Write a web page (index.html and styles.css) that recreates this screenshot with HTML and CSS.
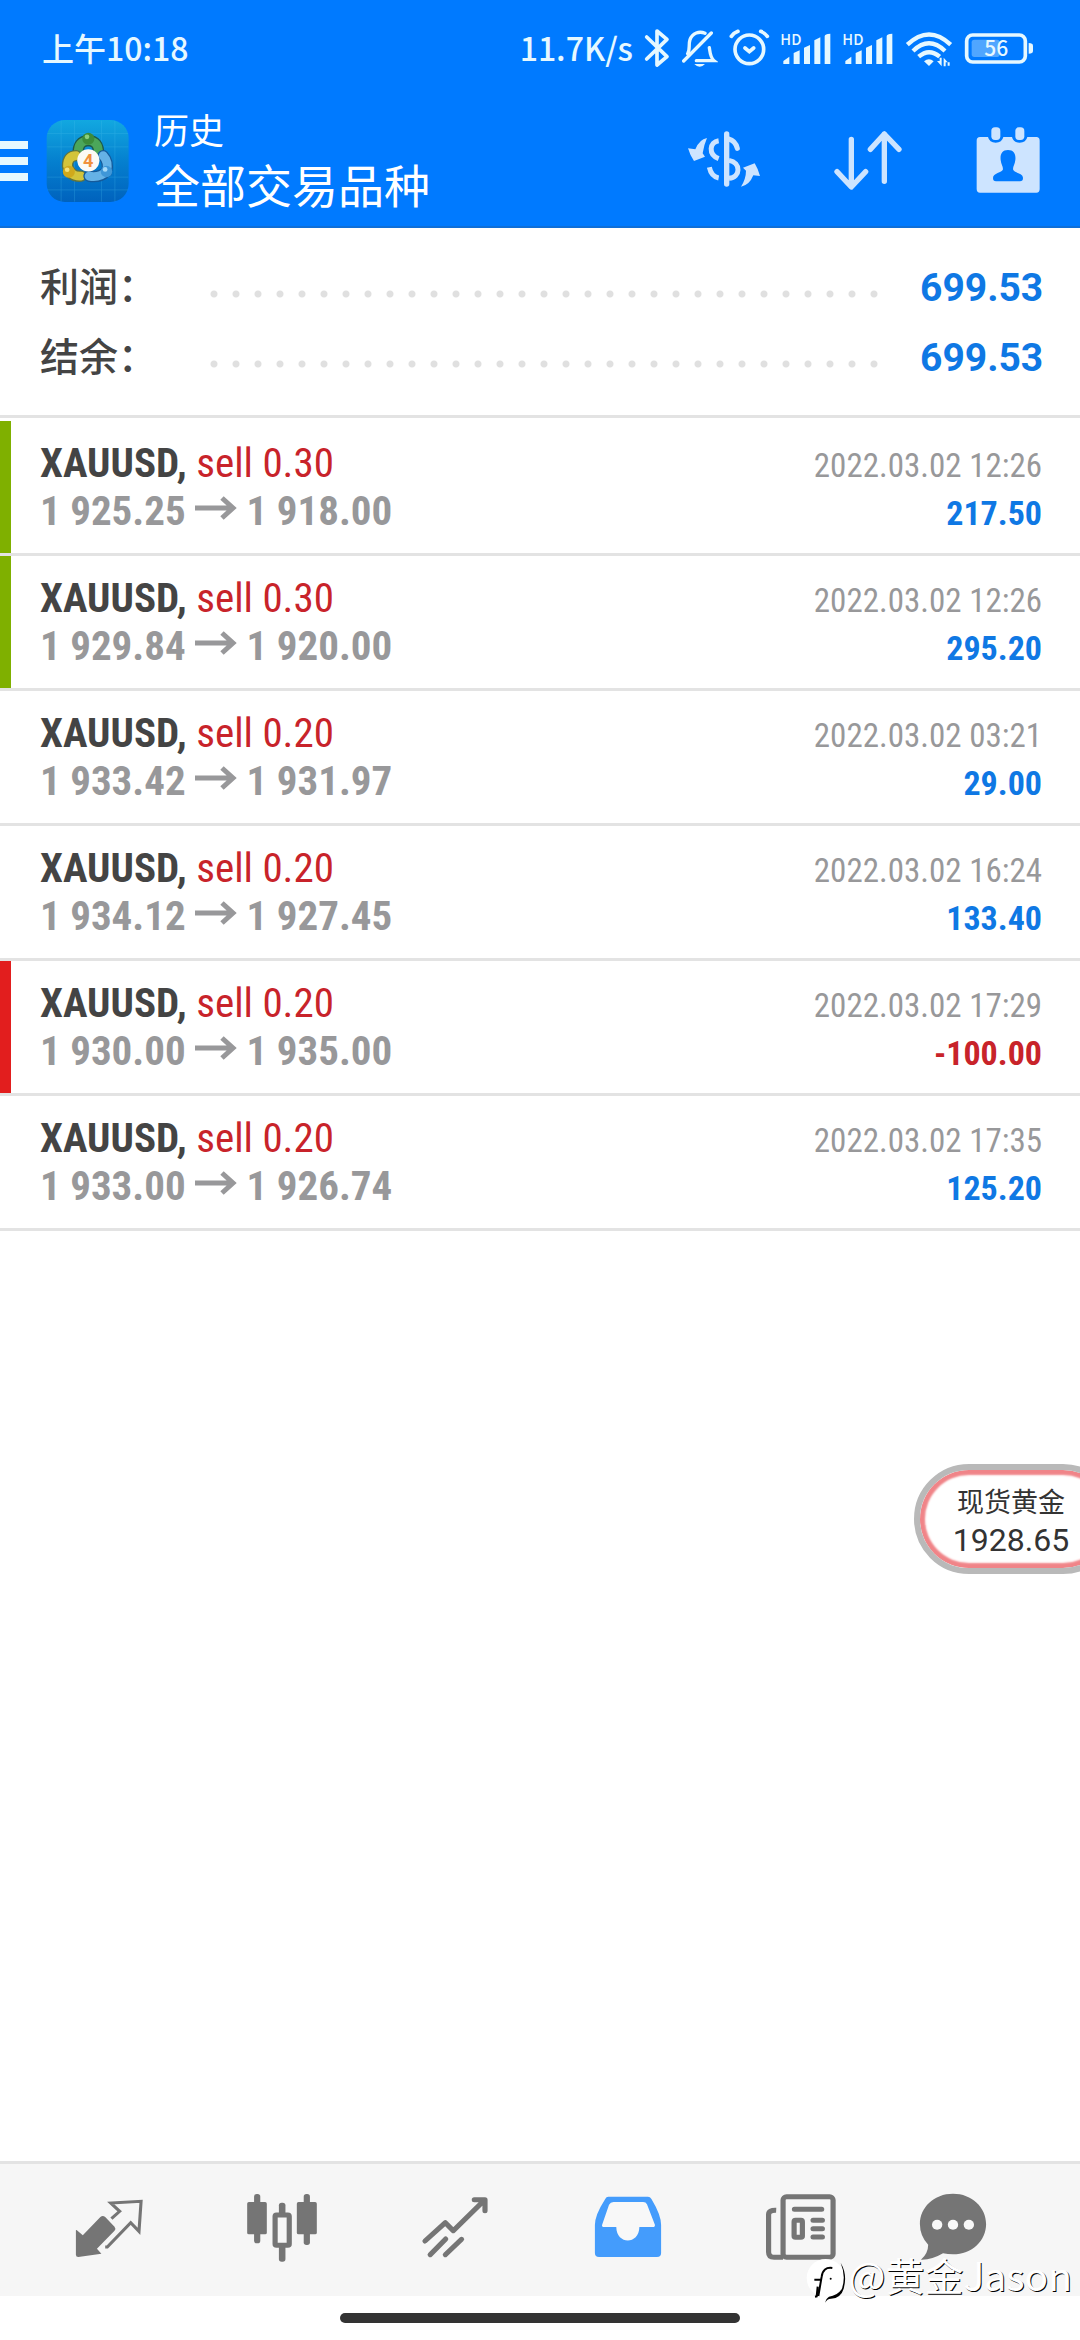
FILE: index.html
```
<!DOCTYPE html>
<html lang="zh-CN">
<head>
<meta charset="utf-8">
<meta name="viewport" content="width=device-width, initial-scale=1">
<title>历史</title>
<link rel="stylesheet" href="styles.css">
</head>
<body>
<div class="app">
  <header class="header">
    <div class="status">
      <span class="clock">上午10:18</span>
      <div class="status-icons">
        <span>11.7K/s</span>
        <svg width="26" height="42" viewBox="30 20 78 126" fill="none" stroke="currentColor" stroke-width="11" stroke-linejoin="round" stroke-linecap="round"><path d="M38 50L99 109L69 134V32L99 57L38 116"/></svg>
        <svg width="37" height="42" viewBox="150 20 111 126" fill="none" stroke="currentColor" stroke-width="10" stroke-linecap="round"><path d="M170 100C178 88 172 72 177 58C184 38 205 31 222 39M241 38L158 122M196 121H249C238 112 237 96 235 82"/><path d="M190 131H222Q206 148 190 131Z" fill="currentColor" stroke="none"/></svg>
        <svg width="41" height="42" viewBox="297 20 123 126" fill="none" stroke="currentColor" stroke-width="11" stroke-linecap="round"><circle cx="358" cy="87" r="43"/><path d="M345 83L358 94L371 83M304 48Q311 38 324 33M412 48Q405 38 392 33"/></svg>
        <svg width="51" height="42" viewBox="450 20 153 126" fill="currentColor"><text class="hd" x="448" y="73">HD</text><path d="M457 131V122L475 109V131ZM488 131V98L506 90V131ZM519 131V82L537 74V131ZM550 131V60L568 51V131ZM581 131V48Q581 40 598 40V131Z"/></svg>
        <svg width="51" height="42" viewBox="450 20 153 126" fill="currentColor"><text class="hd" x="448" y="73">HD</text><path d="M457 131V122L475 109V131ZM488 131V98L506 90V131ZM519 131V82L537 74V131ZM550 131V60L568 51V131ZM581 131V48Q581 40 598 40V131Z"/></svg>
        <svg width="48" height="42" viewBox="816 20 144 126" fill="none" stroke="currentColor" stroke-width="13"><path d="M823 73Q888 12 953 73M840 92Q888 46 936 92M857 109Q888 82 920 109"/><path d="M873 123Q888 110 902 123L888 137ZM912 122H920V112H926V138ZM932 138V112L944 126H950V136H944V126H938V138Z" fill="currentColor" stroke="none"/></svg>
        <svg width="70" height="42" viewBox="999 20 210 126" fill="currentColor"><rect x="1007" y="44" width="176" height="81" rx="18" fill="none" stroke="currentColor" stroke-width="11"/><rect x="1022" y="58" width="84" height="52" rx="8" opacity=".35"/><path d="M1193 68Q1206 68 1206 76V92Q1206 100 1193 100Z"/><text class="level" x="1096" y="108" text-anchor="middle">56</text></svg>
      </div>
    </div>
    <div class="toolbar">
      <button class="menu" aria-label="菜单"><span></span><span></span><span></span></button>
      <svg class="logo" width="84" height="84" viewBox="20 32 250 250">
        <defs>
          <linearGradient id="tile" x2="0" y2="1"><stop stop-color="#12a8e0"/><stop offset=".5" stop-color="#0580cf"/><stop offset="1" stop-color="#0062bd"/></linearGradient>
        </defs>
        <rect x="22" y="35" width="244" height="244" rx="54" fill="url(#tile)"/>
        <path d="M65 37V278M105 37V278M185 37V278M225 37V278M24 75H265M24 115H265M24 205H265M24 243H265" stroke="#4cc2ee" stroke-width="2" opacity=".35"/>
        <g fill="none" stroke-width="26" stroke-linecap="round">
          <path d="M116 135Q114 98 146 96Q178 98 176 135" stroke="#1d5a4a" stroke-width="34"/>
          <path d="M116 133Q114 98 146 96Q178 98 176 133" stroke="#4ba65a"/>
          <path d="M110 141Q84 142 84 172Q92 204 124 202" stroke="#5f7440" stroke-width="34"/>
          <path d="M110 141Q84 142 84 172Q92 204 124 202" stroke="#d3c43a"/>
          <path d="M190 141Q208 160 200 188Q180 208 148 202" stroke="#155a9a" stroke-width="34"/>
          <path d="M190 141Q208 160 200 188Q180 208 148 202" stroke="#65b2e6"/>
        </g>
        <circle cx="146" cy="91" r="18" fill="#3c8c3a"/><circle cx="142" cy="85" r="7" fill="#8bcf7c"/>
        <circle cx="88" cy="189" r="18" fill="#d0a91c"/><circle cx="83" cy="183" r="7" fill="#f4e27a"/>
        <circle cx="200" cy="188" r="17" fill="#3f97d8"/><circle cx="196" cy="182" r="7" fill="#a6daf8"/>
        <circle cx="146" cy="155" r="33" fill="#fbfaf5"/>
        <text class="logo-digit" x="146" y="175" text-anchor="middle">4</text>
      </svg>
      <div class="titles">
        <h1>历史</h1>
        <p>全部交易品种</p>
      </div>
      <div class="actions">
        <button aria-label="货币"><svg width="74" height="70" viewBox="45 36 222 210" fill="none" stroke="currentColor" stroke-width="15"><path d="M164 60V210" stroke-width="16" stroke-linecap="round"/><path d="M170 75Q190 80 196 103" stroke-linecap="round"/><path d="M140 80C112 84 108 122 140 134M171 139C208 146 206 190 171 193M112 160Q118 188 140 192"/><path d="M105 72Q82 76 70 106L48 103Q54 124 66 141L99 128L92 118Q96 92 105 72ZM207 218Q232 214 244 184L264 186Q258 164 248 148L213 161L222 170Q222 194 207 218Z" fill="currentColor" stroke="none"/></svg></button>
        <button aria-label="排序"><svg width="70" height="70" viewBox="480 36 210 210" fill="none" stroke="currentColor" stroke-width="16" stroke-linecap="round" stroke-linejoin="round"><path d="M535 76V218M492 173L535 219L578 173M634 202V60M592 106L634 60L678 106"/></svg></button>
        <button aria-label="期间"><svg width="66" height="70" viewBox="915 36 198 210" fill="currentColor"><path d="M930 69H954Q958 86 977 86T1000 69H1026Q1030 86 1049 86T1072 69H1099Q1109 69 1109 80V225Q1109 236 1099 236H930Q920 236 920 225V80Q920 69 930 69Z"/><rect x="964" y="40" width="27" height="38" rx="11"/><rect x="1036" y="40" width="27" height="38" rx="11"/><path class="person" d="M1014 108C1032 108 1038 121 1036 138C1035 150 1029 156 1029 166C1032 178 1059 176 1059 192Q1059 202 1050 202H978Q969 202 969 192C969 176 996 178 999 166C999 156 993 150 992 138C990 121 996 108 1014 108Z"/></svg></button>
      </div>
    </div>
  </header>

  <main class="content">
    <dl class="summary">
      <div class="summary-row"><dt>利润：</dt><dd class="dots"></dd><dd class="total">699.53</dd></div>
      <div class="summary-row"><dt>结余：</dt><dd class="dots"></dd><dd class="total">699.53</dd></div>
    </dl>
    <ul class="trades">
      <li class="trade win">
        <div class="name">XAUUSD, <span>sell 0.30</span></div><time>2022.03.02 12:26</time>
        <div class="prices">1 925.25 <svg class="arrow" viewBox="0 0 42 24"><path d="M0 12H38M27 2L38 12L27 22"/></svg> 1 918.00</div><div class="profit">217.50</div>
      </li>
      <li class="trade win">
        <div class="name">XAUUSD, <span>sell 0.30</span></div><time>2022.03.02 12:26</time>
        <div class="prices">1 929.84 <svg class="arrow" viewBox="0 0 42 24"><path d="M0 12H38M27 2L38 12L27 22"/></svg> 1 920.00</div><div class="profit">295.20</div>
      </li>
      <li class="trade">
        <div class="name">XAUUSD, <span>sell 0.20</span></div><time>2022.03.02 03:21</time>
        <div class="prices">1 933.42 <svg class="arrow" viewBox="0 0 42 24"><path d="M0 12H38M27 2L38 12L27 22"/></svg> 1 931.97</div><div class="profit">29.00</div>
      </li>
      <li class="trade">
        <div class="name">XAUUSD, <span>sell 0.20</span></div><time>2022.03.02 16:24</time>
        <div class="prices">1 934.12 <svg class="arrow" viewBox="0 0 42 24"><path d="M0 12H38M27 2L38 12L27 22"/></svg> 1 927.45</div><div class="profit">133.40</div>
      </li>
      <li class="trade loss">
        <div class="name">XAUUSD, <span>sell 0.20</span></div><time>2022.03.02 17:29</time>
        <div class="prices">1 930.00 <svg class="arrow" viewBox="0 0 42 24"><path d="M0 12H38M27 2L38 12L27 22"/></svg> 1 935.00</div><div class="profit">-100.00</div>
      </li>
      <li class="trade">
        <div class="name">XAUUSD, <span>sell 0.20</span></div><time>2022.03.02 17:35</time>
        <div class="prices">1 933.00 <svg class="arrow" viewBox="0 0 42 24"><path d="M0 12H38M27 2L38 12L27 22"/></svg> 1 926.74</div><div class="profit">125.20</div>
      </li>
    </ul>
  </main>

  <aside class="quote">
    <span class="quote-name">现货黄金</span>
    <span class="quote-price">1928.65</span>
  </aside>

  <nav class="tabs">
    <button class="tab" aria-label="行情"><svg viewBox="199 120 232 240" preserveAspectRatio="none"><path d="M221 240L239 256L290 201Q297 195 304 201L331 230Q336 236 331 242L280 296L293 311L226 321Q219 321 219 314V241Z" fill="currentColor"/><path d="M322 206L346 184L320 159L408 154L402 244L378 218L310 291H304" fill="none" stroke="currentColor" stroke-width="9"/></svg></button>
    <button class="tab" aria-label="图表"><svg viewBox="700 120 232 240" preserveAspectRatio="none"><g fill="currentColor"><rect x="735" y="132" width="18" height="148" rx="8"/><rect x="715" y="156" width="57" height="97" rx="5"/><rect x="879" y="132" width="18" height="153" rx="8"/><rect x="859" y="156" width="58" height="97" rx="5"/><rect x="807" y="158" width="19" height="40" rx="8"/><rect x="807" y="285" width="19" height="50" rx="8"/></g><rect x="796" y="195" width="41" height="91" rx="4" fill="none" stroke="currentColor" stroke-width="15"/></svg></button>
    <button class="tab" aria-label="交易"><svg viewBox="1202 120 232 240" preserveAspectRatio="none" fill="none" stroke="currentColor" stroke-width="15" stroke-linecap="round" stroke-linejoin="round"><path d="M1231 273L1290 218L1313 242L1403 151M1374 149H1405V182M1246 314L1291 267M1290 314L1337 268"/></svg></button>
    <button class="tab active" aria-label="历史" aria-current="page"><svg viewBox="138 120 232 240" preserveAspectRatio="none"><path fill="currentColor" d="M197 140H312Q318 140 322 147Q350 195 350 225V309Q350 321 338 321H170Q158 321 158 309V225Q158 195 188 147Q191 140 197 140Z"/><path class="hole" d="M212 156H298Q306 156 309 163L332 224Q333 231 326 231H287C286 285 221 285 220 231H185Q177 231 179 224L199 164Q203 156 212 156Z"/></svg></button>
    <button class="tab" aria-label="新闻"><svg viewBox="642 120 232 240" preserveAspectRatio="none" fill="none" stroke="currentColor" stroke-width="15" stroke-linecap="round"><rect x="706" y="140" width="145" height="182" rx="10"/><path d="M686 181Q664 180 664 194V306Q664 322 680 322H706" stroke-linecap="butt"/><path d="M739 178H818M793 211H820M793 236H820M793 261H820"/><rect x="738" y="211" width="24" height="51" rx="4"/></svg></button>
    <button class="tab last" aria-label="聊天"><svg viewBox="1083 120 232 240" preserveAspectRatio="none"><path fill="currentColor" d="M1199 131C1254 131 1295 172 1295 222S1254 313 1199 313Q1184 313 1170 310Q1138 330 1106 329Q1127 310 1127 284Q1103 258 1103 222C1103 172 1144 131 1199 131Z"/><g class="hole"><circle cx="1153" cy="224" r="15"/><circle cx="1199" cy="224" r="15"/><circle cx="1245" cy="224" r="15"/></g></svg></button>
  </nav>
  <footer class="gesture"><span></span></footer>

  <div class="watermark">
    <svg width="44" height="46" viewBox="26 236 132 138"><circle cx="88" cy="296" r="57" fill="#fff"/><path d="M54 301H74M66 350L76 292Q80 262 108 266M64 322L61 351L56 352" fill="none" stroke="#000" stroke-width="6"/><path d="M133 250Q150 292 136 330Q122 350 98 352Q88 358 87 370Q92 358 104 358Q134 356 142 328Q154 286 133 250Z" fill="#000"/><circle cx="103" cy="298" r="3"/></svg>
    <span>@黄金Jason</span>
  </div>
</div>
</body>
</html>
```
FILE: styles.css
```
* { box-sizing: border-box; }

body {
  margin: 0;
  background: #fff;
  color: #444;
  font-family: "Roboto", "Noto Sans CJK SC", sans-serif;
}

h1, p, dl, dd, ul { margin: 0; padding: 0; }
ul { list-style: none; }
svg { display: block; flex: none; }

button {
  padding: 0;
  border: 0;
  background: none;
  color: inherit;
}

.app {
  position: relative;
  display: flex;
  flex-direction: column;
  min-height: 100vh;
  overflow: hidden;
}

/* Header */
.header { background: #007aff; color: #e6f8ff; }

.status {
  display: flex;
  align-items: center;
  justify-content: space-between;
  height: 96px;
  padding: 0 46px 0 42px;
  font: 500 32px/48px "Noto Sans CJK SC", sans-serif;
}

.status-icons { display: flex; align-items: center; gap: 11px; }
.clock, .status-icons span { padding-bottom: 2px; }
.hd { font: 500 44px "Noto Sans CJK SC", sans-serif; }
.level { font: 500 63px "Noto Sans CJK SC", sans-serif; }

.toolbar {
  display: flex;
  align-items: center;
  height: 132px;
  padding-right: 39px;
  border-bottom: 2px solid #0f6fd8;
}

.menu { display: grid; gap: 8px; width: 28px; }
.menu span { height: 8px; background: #e6f8ff; }
.logo { margin: 0 24px 0 18px; }
.logo-digit { font: 700 54px "Roboto", sans-serif; fill: #f0913c; }

.titles {
  flex: 1;
  padding-bottom: 4px;
  color: #fff;
  font-family: "Noto Sans CJK SC", sans-serif;
}
.titles h1 { font-size: 35px; line-height: 48px; font-weight: 400; }
.titles p { font-size: 46px; line-height: 60px; }

.actions { display: flex; gap: 72px; color: #cde4ff; }
.person { fill: #007aff; }

/* Totals */
.summary { padding: 24px 40px 23px; border-bottom: 3px solid #e3e3e3; }

.summary-row {
  display: grid;
  grid-template-columns: 170px 1fr 120px;
  align-items: center;
  height: 70px;
}
.summary dt {
  padding-bottom: 6px;
  font: 500 39px/56px "Noto Sans CJK SC", sans-serif;
}
.dots {
  height: 8px;
  margin: 14px 40px 0 0;
  background: radial-gradient(circle at 4px 4px, #e0e0e0 3px, transparent 4px) 0 0 / 22px 8px repeat-x;
}
.total {
  padding-top: 2px;
  color: #0f78e4;
  font-size: 39px;
  font-weight: 700;
  text-align: right;
}

/* Trades */
.trades {
  padding-top: 3px;
  font-family: "Roboto Condensed", sans-serif;
}

.trade {
  display: grid;
  grid-template-columns: 1fr auto;
  grid-template-rows: 48px 48px;
  align-items: baseline;
  margin-bottom: 3px;
  padding: 18px 38px 18px 29px;
  border-left: 11px solid transparent;
  box-shadow: 0 3px #e3e3e3;
  font-size: 41px;
  line-height: 48px;
}
.win { border-left-color: #7fb000; }
.loss { border-left-color: #e21e1e; }

.name { font-weight: 700; }
.name span { color: #c8232a; font-weight: 400; }
.prices { color: #98989a; font-weight: 700; }
.arrow {
  display: inline-block;
  width: 42px;
  height: 24px;
  vertical-align: 5px;
  fill: none;
  stroke: currentColor;
  stroke-width: 5;
}
.trade time { color: #98989a; font-size: 33px; text-align: right; }
.profit { color: #0f78e4; font-size: 34px; font-weight: 700; text-align: right; }
.loss .profit { color: #c8232a; }

.content { flex: 1; }

/* Floating quote */
.quote {
  position: absolute;
  top: 1464px;
  right: -38px;
  display: flex;
  flex-direction: column;
  align-items: center;
  width: 204px;
  height: 110px;
  padding: 12px 10px 0 0;
  border: 6px solid #b9b9b9;
  border-radius: 55px;
  background: #fff;
  box-shadow: inset 0 0 2px 5px #f08488;
  color: #333;
}
.quote-name { font: 400 27px/38px "Noto Sans CJK SC", sans-serif; }
.quote-price { font-size: 32px; line-height: 40px; }

/* Bottom tabs */
.tabs {
  display: flex;
  height: 135px;
  padding: 0 62px 0 22px;
  border-top: 3px solid #e3e3e3;
  background: #f6f6f6;
  color: #757575;
}
.tab { display: grid; place-items: center; flex: 173; }
.tab.last { flex: 131; }
.tab.active { color: #449cfc; }
.tab svg { width: 80px; height: 80px; }
.hole { fill: #f8f8f8; }

.gesture {
  display: grid;
  place-items: center;
  height: 44px;
}
.gesture span { width: 37%; height: 10px; border-radius: 5px; background: #333; }

.watermark {
  position: absolute;
  right: 8px;
  bottom: 36px;
  display: flex;
  align-items: center;
  color: #fff;
  font: 400 39px/50px "Noto Sans CJK SC", sans-serif;
  text-shadow: 1px 1px 0 #000;
}
.watermark svg { margin-top: 14px; }
```
